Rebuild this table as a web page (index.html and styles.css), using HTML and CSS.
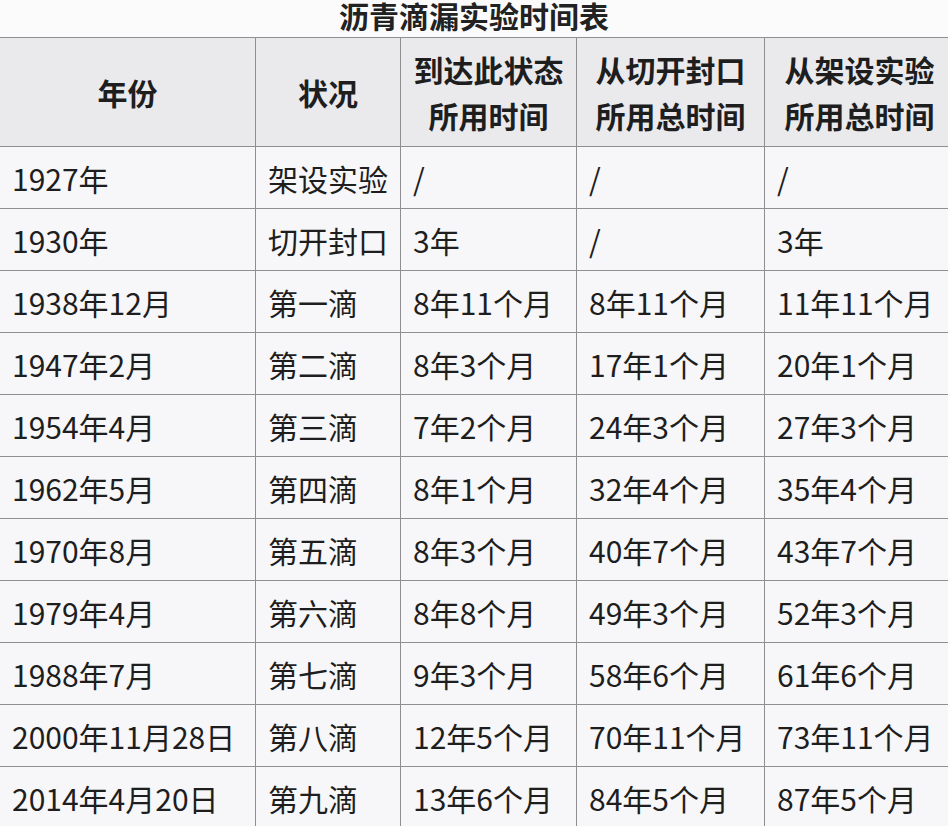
FILE: index.html
```html
<!DOCTYPE html>
<html lang="zh-CN">
<head>
<meta charset="utf-8">
<title>沥青滴漏实验时间表</title>
<link rel="stylesheet" href="styles.css">
</head>
<body>
<div class="title">沥青滴漏实验时间表</div>
<table class="tbl">
  <colgroup>
    <col class="c1"><col class="c2"><col class="c3"><col class="c4"><col class="c5">
  </colgroup>
  <thead>
    <tr>
      <th>年份</th>
      <th>状况</th>
      <th>到达此状态<br>所用时间</th>
      <th>从切开封口<br>所用总时间</th>
      <th>从架设实验<br>所用总时间</th>
    </tr>
  </thead>
  <tbody>
    <tr><td>1927年</td><td>架设实验</td><td>/</td><td>/</td><td>/</td></tr>
    <tr><td>1930年</td><td>切开封口</td><td>3年</td><td>/</td><td>3年</td></tr>
    <tr><td>1938年12月</td><td>第一滴</td><td>8年11个月</td><td>8年11个月</td><td>11年11个月</td></tr>
    <tr><td>1947年2月</td><td>第二滴</td><td>8年3个月</td><td>17年1个月</td><td>20年1个月</td></tr>
    <tr><td>1954年4月</td><td>第三滴</td><td>7年2个月</td><td>24年3个月</td><td>27年3个月</td></tr>
    <tr><td>1962年5月</td><td>第四滴</td><td>8年1个月</td><td>32年4个月</td><td>35年4个月</td></tr>
    <tr><td>1970年8月</td><td>第五滴</td><td>8年3个月</td><td>40年7个月</td><td>43年7个月</td></tr>
    <tr><td>1979年4月</td><td>第六滴</td><td>8年8个月</td><td>49年3个月</td><td>52年3个月</td></tr>
    <tr><td>1988年7月</td><td>第七滴</td><td>9年3个月</td><td>58年6个月</td><td>61年6个月</td></tr>
    <tr><td>2000年11月28日</td><td>第八滴</td><td>12年5个月</td><td>70年11个月</td><td>73年11个月</td></tr>
    <tr><td>2014年4月20日</td><td>第九滴</td><td>13年6个月</td><td>84年5个月</td><td>87年5个月</td></tr>
  </tbody>
</table>
</body>
</html>
```
FILE: styles.css
```css
html, body {
  margin: 0;
  padding: 0;
  background: #fbfbfc;
  overflow: hidden;
}
body {
  font-family: "Noto Sans CJK SC", "Noto Sans", sans-serif;
  color: #1e1e1e;
  width: 948px;
  height: 826px;
}
.title {
  height: 37px;
  line-height: 30px;
  text-align: center;
  font-size: 30px;
  font-weight: 700;
  color: #222;
}
.tbl {
  border-collapse: collapse;
  table-layout: fixed;
  width: 955px;
  margin-left: -1px;
  background: #f7f7f9;
}
.c1 { width: 256px; }
.c2 { width: 145px; }
.c3 { width: 176px; }
.c4 { width: 188px; }
.c5 { width: 190px; }
.tbl th, .tbl td {
  border: 1px solid #8f8f92;
  padding: 0 0 0 12px;
  font-size: 30px;
  white-space: nowrap;
  overflow: hidden;
}
.tbl th {
  background: #eaeaed;
  font-weight: 700;
  text-align: center;
  line-height: 46px;
  height: 108px;
  padding: 0;
}
.tbl td {
  height: 61px;
  line-height: 40px;
  font-weight: 400;
  text-align: left;
}
```
